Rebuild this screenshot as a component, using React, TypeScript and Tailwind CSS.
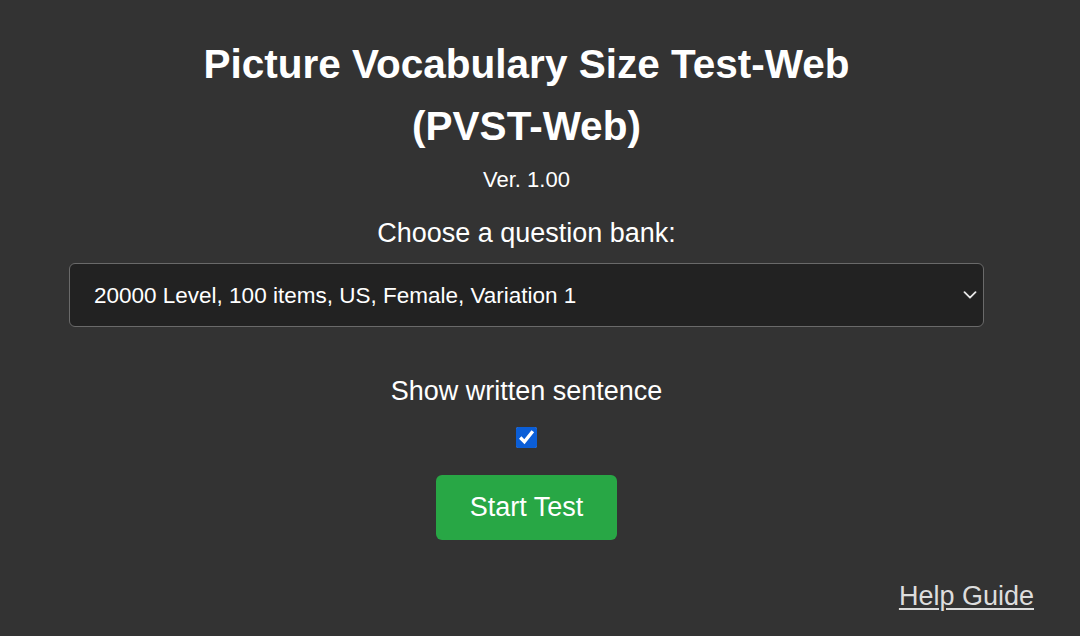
import React, { useState } from 'react';

const BANKS = [
  '20000 Level, 100 items, US, Female, Variation 1',
  '20000 Level, 100 items, US, Male, Variation 1',
  '20000 Level, 100 items, UK, Female, Variation 1',
];

export default function App() {
  const [bank, setBank] = useState(BANKS[0]);
  const [showSentence, setShowSentence] = useState(true);

  return (
    <div
      className="min-h-[636px] w-full bg-[#333333] text-white"
      style={{ fontFamily: '"Liberation Sans", Arial, sans-serif' }}
    >
      <div className="flex flex-col items-center pl-[69px] pr-[96px] pt-[33px]">
        <h1 className="text-center text-[40.5px] font-bold leading-[62px]">
          Picture Vocabulary Size Test-Web
          <br />
          (PVST-Web)
        </h1>
        <p className="mt-[11px] text-[22px] leading-[24px]">Ver. 1.00</p>
        <label htmlFor="bank" className="mt-[26px] text-[27px] leading-[30px]">
          Choose a question bank:
        </label>
        <div className="relative mt-[15px] w-full">
          <select
            id="bank"
            value={bank}
            onChange={(e) => setBank(e.target.value)}
            className="h-[64px] w-full appearance-none rounded-[6px] border border-[#6a6a6a] bg-[#222222] pl-[24px] pr-[40px] pt-[2px] text-[22.5px] text-white outline-none"
          >
            {BANKS.map((b) => (
              <option key={b} value={b}>
                {b}
              </option>
            ))}
          </select>
          <svg
            className="pointer-events-none absolute right-[7px] top-[28px]"
            width="14"
            height="8"
            viewBox="0 0 14 8"
            fill="none"
            stroke="#e8e8e8"
            strokeWidth="1.8"
            strokeLinecap="round"
            strokeLinejoin="round"
          >
            <path d="M1.5 1.2l5.5 5.5 5.5-5.5" />
          </svg>
        </div>
        <label htmlFor="sentence" className="mt-[49px] text-[27px] leading-[30px]">
          Show written sentence
        </label>
        <input
          id="sentence"
          type="checkbox"
          checked={showSentence}
          onChange={(e) => setShowSentence(e.target.checked)}
          className="mt-[21px] h-[21px] w-[21px] accent-[#0b5ed7]"
        />
        <button
          type="button"
          className="mt-[27px] h-[65px] w-[181px] rounded-[6px] bg-[#28a745] text-[27px] text-white"
        >
          Start Test
        </button>
      </div>
      <div className="flex justify-end pr-[46px] pt-[41px]">
        <a href="#" className="text-[27px] leading-[30px] text-[#dddddd] underline underline-offset-[3px]">
          Help Guide
        </a>
      </div>
    </div>
  );
}
